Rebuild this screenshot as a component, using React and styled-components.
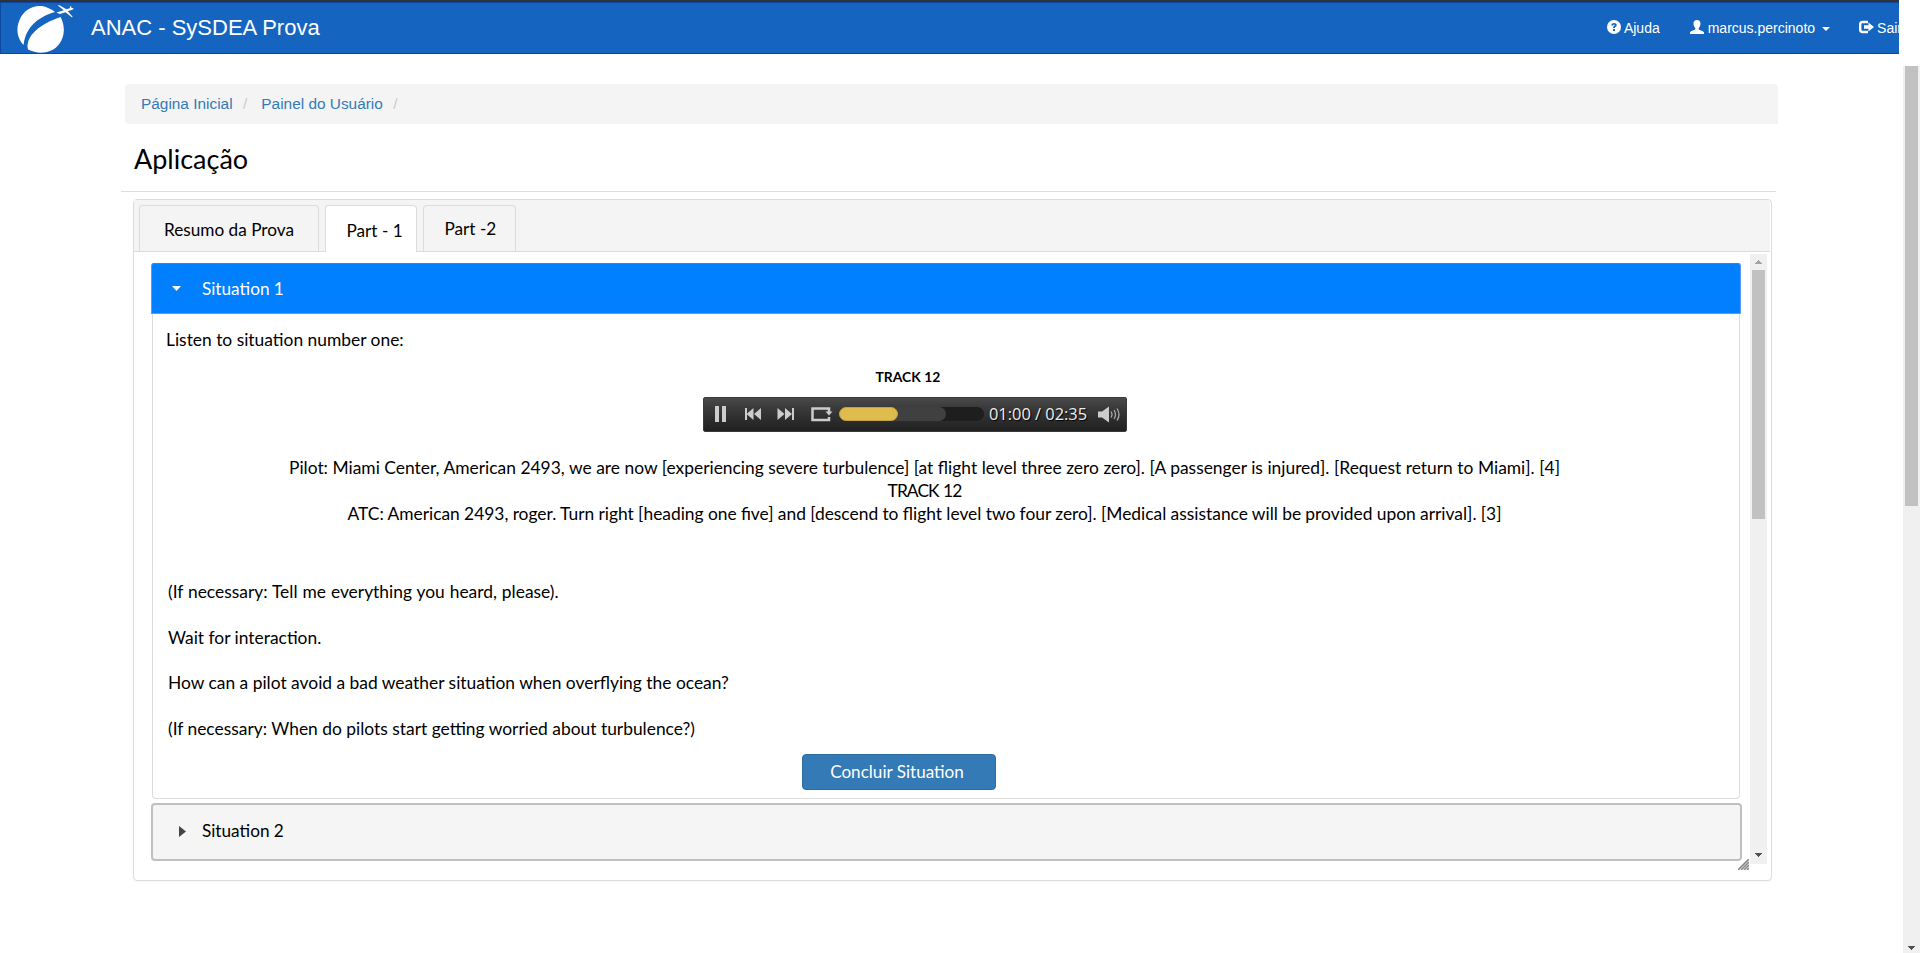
import React from "react";
import styled, { createGlobalStyle } from "styled-components";

const Global = createGlobalStyle`
  * { box-sizing: border-box; }
  body { margin: 0; background: #fff; overflow: hidden; }
`;

const sans = `"Liberation Sans", Arial, sans-serif`;
const lato = `Lato, "Open Sans", sans-serif`;

const Page = styled.div`
  display: flex;
  flex-direction: column;
  width: 1920px;
  height: 953px;
  background: #fff;
  color: #000;
  font: 17.4px/23px ${lato};
  white-space: nowrap;
`;

const Navbar = styled.header`
  display: flex;
  align-items: center;
  flex: none;
  width: 1899px;
  height: 54px;
  padding-left: 15px;
  overflow: hidden;
  background: #1565c0;
  border-top: 2px solid #2f3338;
  border-bottom: 1px solid #0d47a1;
  box-shadow: inset 1px 1px 0 #0d47a1;
  color: #fff;
  font-family: ${sans};
`;

const Brand = styled.span`
  flex: 1;
  margin-left: 16px;
  font-size: 22px;
  line-height: 26px;
`;

const NavItem = styled.a`
  display: flex;
  align-items: center;
  flex: none;
  gap: ${(p) => p.$gap || 3}px;
  margin-left: ${(p) => p.$space || 0}px;
  margin-right: ${(p) => (p.$last ? -3 : 0)}px;
  font-size: 14px;
  line-height: 20px;
  color: #fff;
  svg { flex: none; margin-top: -1px; }
`;

const Caret = styled.i`
  width: 0;
  height: 0;
  margin: 2px 0 0 3px;
  border: 4px solid transparent;
  border-top-color: #fff;
  border-bottom: 0;
`;

const Content = styled.div`
  display: flex;
  flex: 1;
  justify-content: space-between;
  min-height: 0;
`;

const Main = styled.main`
  width: 1655px;
  margin-left: 121px;
  padding-top: 30px;
`;

const Breadcrumb = styled.nav`
  display: flex;
  align-items: center;
  width: 1653px;
  height: 40px;
  margin-left: 4px;
  padding: 0 16px;
  background: #f4f4f4;
  border-radius: 4px 4px 0 4px;
  font: 15.4px/20px ${sans};
  color: #ccc;
  a { color: #337ab7; }
  span { margin: 0 14px 0 10.5px; }
`;

const Heading = styled.h1`
  height: 68px;
  margin: 0 0 7px;
  padding: 18px 0 0 13px;
  border-bottom: 1px solid #ddd;
  font: 400 27px/34px ${lato};
`;

const Panel = styled.section`
  width: 1639px;
  height: 682px;
  margin-left: 12px;
  border: 1px solid #dcdcdc;
  border-radius: 4px;
  box-shadow: 0 1px 1px rgba(0, 0, 0, 0.04);
`;

const TabBar = styled.div`
  display: flex;
  gap: 6px;
  height: 52px;
  margin-right: 1px;
  padding: 5px 0 0 5px;
  background: #f4f4f4;
  border-bottom: 1px solid #dcdcdc;
`;

const Tab = styled.button`
  display: flex;
  width: ${(p) => p.$w}px;
  height: ${(p) => (p.$active ? 47 : 46)}px;
  padding: ${(p) => p.$top}px 0 0 ${(p) => p.$left}px;
  border: 1px solid #dcdcdc;
  border-bottom: 0;
  border-radius: 4px 4px 0 0;
  background: ${(p) => (p.$active ? "#fff" : "#f4f4f4")};
  color: #000;
  font: 17.2px/23px ${lato};
`;

const PanelBody = styled.div`
  display: flex;
  gap: 8px;
  padding: 11px 0 0 17px;
`;

const Accordion = styled.div`
  width: 1591px;
`;

const OpenHeader = styled.div`
  display: flex;
  align-items: center;
  width: 1590px;
  height: 51px;
  padding: 0 0 1px 20px;
  gap: 21px;
  background: #007fff;
  border: 1px solid #5b9cf5;
  border-top-color: #3b7cf0;
  border-radius: 3px 3px 0 0;
  color: #fff;
`;

const ClosedHeader = styled.div`
  display: flex;
  align-items: center;
  height: 58px;
  margin-top: 4px;
  padding: 0 0 2px 26px;
  gap: 16px;
  background: #f5f5f5;
  border: 2px solid #c0c0c0;
  border-radius: 4px;
`;

const Label = styled.span`
  margin-top: ${(p) => p.$drop || 0}px;
  font-size: 17.2px;
`;

const Pane = styled.div`
  width: 1588px;
  height: 485px;
  margin-left: 1px;
  padding: 14px 14px 0 13px;
  border: 1px solid #dcdcdc;
  border-top: 0;
  border-radius: 0 0 4px 4px;
`;

const Line = styled.p`
  margin: 0;
  letter-spacing: ${(p) => p.$tracking || "normal"};
  word-spacing: ${(p) => p.$words || "normal"};
`;

const TrackTitle = styled.h2`
  margin: 16px 0 10px 709.5px;
  font: 700 13.9px/20px ${lato};
`;

const Player = styled.div`
  display: flex;
  align-items: center;
  width: 424px;
  height: 35px;
  margin-left: 537px;
  padding: 0 0 1px 11px;
  border: 1px solid #3a3a3a;
  border-radius: 2px;
  background: linear-gradient(#4a4a4a, #3a3a3a 30%, #202020);
`;

const Progress = styled.div`
  width: 145px;
  height: 14px;
  margin-left: 4px;
  border-radius: 7px;
  background: #1e1e1e;
`;

const Buffered = styled.div`
  width: 107px;
  height: 14px;
  border-radius: 7px;
  background: #404040;
`;

const Played = styled.div`
  width: 59px;
  height: 14px;
  border: 1px solid #c4a23c;
  border-radius: 7px;
  background: #dfbc4e;
`;

const Time = styled.span`
  width: 109px;
  margin-left: 5px;
  color: #eee;
  font: 16.4px/20px "Open Sans", sans-serif;
  text-shadow: 1px 1px 1px #000;
`;

const Transcript = styled.div`
  width: 1517px;
  margin-top: 24px;
  text-align: center;
`;

const Notes = styled.div`
  display: flex;
  flex-direction: column;
  gap: 22.6px;
  margin: 55px 0 14.2px 2px;
`;

const Finish = styled.button`
  display: block;
  width: 194px;
  height: 36px;
  margin-left: 636px;
  padding: 0 4px 0 0;
  border: 1px solid #2e6da4;
  border-radius: 4px;
  background: #337ab7;
  color: #fff;
  font: 17.1px/23px ${lato};
`;

const Track = styled.div`
  display: flex;
  flex-direction: column;
  align-items: center;
  justify-content: space-between;
  width: 17px;
  height: ${(p) => p.$h}px;
  margin-top: ${(p) => p.$top}px;
  background: #f0f0f0;
`;

const Thumb = styled.div`
  width: 13px;
  height: ${(p) => p.$h}px;
  margin-bottom: auto;
  background: #c1c1c1;
`;

const ArrowCell = styled.div`
  padding: ${(p) => p.$p};
  svg { display: block; }
`;

const Grip = styled.svg`
  display: block;
  margin: -2px 0 0 1587px;
`;

const Arrow = ({ up }) => (
  <svg width="7" height="4" shapeRendering="crispEdges">
    {up ? (
      <path d="M3 0h1v1h1v1h1v1h1v1H0V3h1V2h1V1h1z" fill="#a3a3a3" />
    ) : (
      <path d="M0 0h7v1H6v1H5v1H4v1H3V3H2V2H1V1H0z" fill="#505050" />
    )}
  </svg>
);

const Logo = () => (
  <svg width="60" height="50" viewBox="15 2 60 50" fill="#fff">
    <path d="M23.5 44C17.500 38 15.500 28 19.500 19C24 8 36 2 47 6.500Q52 8.500 55 11C41 15 26 24 23.500 44Z" />
    <path d="M60.500 16C66 26 64.500 38 57 45.500C50 52.500 38 53.500 28 48.500C25 38 36 24 60.500 16Z" />
    <path d="M57.500 4.200L60 4.500L66.300 8.300L69.800 7.300L70 5.300L71 5.200L71.600 7L73.500 7.300L73.300 8.300L71.500 8.900L67.800 10.300L72.800 16L71.800 16.200L65.500 11.300L60 13L56.500 11.700L58 11L63.800 9.300Z" />
  </svg>
);

export default function App() {
  return (
    <Page>
      <Global />
      <Navbar>
        <Logo />
        <Brand>ANAC - SySDEA Prova</Brand>
        <NavItem>
          <svg width="14" height="14" viewBox="0 0 14 14">
            <circle cx="7" cy="7" r="7" fill="#fff" />
            <path d="M4.300 5.500Q4.400 2.900 7.100 2.900Q9.800 3 9.700 5.200Q9.600 6.400 8.300 7Q7.900 7.300 7.900 8.100H6.100Q6 6.700 6.900 6.100Q7.600 5.700 7.600 5.200Q7.500 4.600 7 4.600Q6.300 4.600 6.200 5.500ZM6 9h2v2H6z" fill="#1565c0" />
          </svg>
          Ajuda
        </NavItem>
        <NavItem $space={30} $gap={4}>
          <svg width="14" height="14" viewBox="0 0 14 14" fill="#fff">
            <path d="M7 0C9.300 0 10.600 1.400 10.500 3.700C10.400 5.600 9.600 7.200 8.700 8V9.200C9 10.200 13.500 10.600 14 12.500V14H0V12.500C.5 10.600 5 10.200 5.300 9.200V8C4.400 7.200 3.600 5.600 3.500 3.700C3.400 1.400 4.700 0 7 0Z" />
          </svg>
          marcus.percinoto
          <Caret />
        </NavItem>
        <NavItem $space={29} $last>
          <svg width="15" height="14" viewBox="0 0 15 14">
            <path d="M9 2H3.500Q1.200 2 1.200 4.200V9.800Q1.200 12 3.500 12H9" fill="none" stroke="#fff" strokeWidth="2.400" />
            <path d="M9.500 2.500L15 7L9.500 11.500V8.700H5V5.300H9.500Z" fill="#fff" />
          </svg>
          Sair
        </NavItem>
      </Navbar>
      <Content>
        <Main>
          <Breadcrumb>
            <a>Página Inicial</a>
            <span>/</span>
            <a>Painel do Usuário</a>
            <span>/</span>
          </Breadcrumb>
          <Heading>Aplicação</Heading>
          <Panel>
            <TabBar>
              <Tab $w={180} $top={12} $left={24}>Resumo da Prova</Tab>
              <Tab $w={92} $top={13} $left={20.5} $active>Part - 1</Tab>
              <Tab $w={93} $top={11} $left={20.5}>Part -2</Tab>
            </TabBar>
            <PanelBody>
              <Accordion>
                <OpenHeader>
                  <svg width="9" height="5"><path d="M0 0H9L4.500 5Z" fill="#fff" /></svg>
                  <Label>Situation 1</Label>
                </OpenHeader>
                <Pane>
                  <Line>Listen to situation number one:</Line>
                  <TrackTitle>TRACK 12</TrackTitle>
                  <Player>
                    <svg width="120" height="18" viewBox="0 0 120 18" fill="#ccc">
                      <path d="M0 1h4v16H0zM7 1h4v16H7zM30 3h2v12h-2zM31.500 9l7-6v12zM39 9l7-6v12zM62.500 3l7 6l-7 6zM70 3l7 6l-7 6zM77 3h2v12h-2z" />
                      <path d="M114 12V15H97.500V3.500H114V7" fill="none" stroke="#ccc" strokeWidth="2.500" />
                      <path d="M110.500 6.500h7l-3.500 4z" />
                    </svg>
                    <Progress><Buffered><Played /></Buffered></Progress>
                    <Time>01:00 / 02:35</Time>
                    <svg width="22" height="17" viewBox="0 0 22 17">
                      <path d="M0 5.500h4l7-5v16l-7-5H0z" fill="#ccc" />
                      <path d="M13 5.500q2 3 0 6M16 4q3 4.500 0 9M19 2.500q4 6 0 12" fill="none" stroke="#aaa" strokeWidth="1.300" />
                    </svg>
                  </Player>
                  <Transcript>
                    <Line $words="0.09px">Pilot: Miami Center, American 2493, we are now [experiencing severe turbulence] [at flight level three zero zero]. [A passenger is injured]. [Request return to Miami]. [4]</Line>
                    <Line $tracking="-0.95px" $words="1px">TRACK 12</Line>
                    <Line $words="-0.18px">ATC: American 2493, roger. Turn right [heading one five] and [descend to flight level two four zero]. [Medical assistance will be provided upon arrival]. [3]</Line>
                  </Transcript>
                  <Notes>
                    <Line $words="0.5px">(If necessary: Tell me everything you heard, please).</Line>
                    <Line>Wait for interaction.</Line>
                    <Line>How can a pilot avoid a bad weather situation when overflying the ocean?</Line>
                    <Line>(If necessary: When do pilots start getting worried about turbulence?)</Line>
                  </Notes>
                  <Finish>Concluir Situation</Finish>
                </Pane>
                <ClosedHeader>
                  <svg width="7" height="11"><path d="M0 0L7 5.500L0 11Z" fill="#444" /></svg>
                  <Label $drop={-2}>Situation 2</Label>
                </ClosedHeader>
                <Grip width="11" height="11">
                  <path d="M0 11L11 0M3 11L11 3M6 11L11 6M9 11L11 9" stroke="#888" strokeWidth="1.600" />
                </Grip>
              </Accordion>
              <Track $h={610} $top={-9}>
                <ArrowCell $p="6px 0"><Arrow up /></ArrowCell>
                <Thumb $h={249} />
                <ArrowCell $p="0 0 7px"><Arrow /></ArrowCell>
              </Track>
            </PanelBody>
          </Panel>
        </Main>
        <Track $h={887} $top={12}>
          <Thumb $h={440} />
          <ArrowCell $p="0 0 3px"><Arrow /></ArrowCell>
        </Track>
      </Content>
    </Page>
  );
}
